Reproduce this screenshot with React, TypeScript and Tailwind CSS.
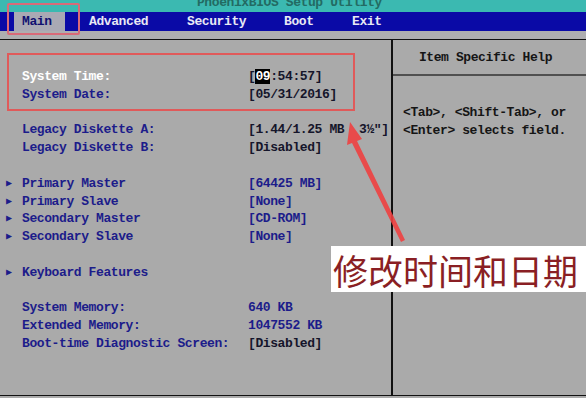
import React from "react"

const mono = { fontFamily: '"Liberation Mono", "DejaVu Sans Mono", monospace' }

type Row = {
  label?: string
  value?: React.ReactNode
  sub?: boolean
  labelClass?: string
  valueClass?: string
}

const rows: Row[] = [
  { label: "System Time:", labelClass: "text-white", value: (
    <span>
      [<span className="bg-black text-white">09</span>:54:57]
    </span>
  ), valueClass: "text-[#15152a]" },
  { label: "System Date:", value: "[05/31/2016]", valueClass: "text-[#15152a]" },
  {},
  { label: "Legacy Diskette A:", value: "[1.44/1.25 MB  3½\"]", valueClass: "text-[#15152a]" },
  { label: "Legacy Diskette B:", value: "[Disabled]", valueClass: "text-[#15152a]" },
  {},
  { label: "Primary Master", sub: true, value: "[64425 MB]" },
  { label: "Primary Slave", sub: true, value: "[None]" },
  { label: "Secondary Master", sub: true, value: "[CD-ROM]" },
  { label: "Secondary Slave", sub: true, value: "[None]" },
  {},
  { label: "Keyboard Features", sub: true },
  {},
  { label: "System Memory:", value: "640 KB" },
  { label: "Extended Memory:", value: "1047552 KB" },
  { label: "Boot-time Diagnostic Screen:", value: "[Disabled]", valueClass: "text-[#15152a]" },
]

const menu = [
  { name: "Main", w: "w-[75px]" },
  { name: "Advanced", w: "w-[98px]" },
  { name: "Security", w: "w-[97px]" },
  { name: "Boot", w: "w-[68px]" },
  { name: "Exit", w: "w-[60px]" },
]

export default function App() {
  return (
    <div
      className="relative w-[586px] h-[398px] overflow-hidden bg-[#aaaaaa] font-bold text-[13px] tracking-[-0.4px] leading-[17.8px]"
      style={mono}
    >
      {/* title bar */}
      <div className="h-[12px] bg-[#3bb9b1] flex justify-end pr-[204px] overflow-hidden">
        <span className="text-[#236b63] leading-[12px] -mt-[3px]">PhoenixBIOS Setup Utility</span>
      </div>

      {/* menu bar */}
      <div className="h-[19px] bg-[#0a0aa6] flex items-stretch pl-[14px]">
        {menu.map((m, i) => (
          <div
            key={m.name}
            className={
              m.w +
              " flex items-center " +
              (i === 0 ? "bg-[#a9a9b4] text-[#101070] pl-[8px] !w-[51px] mr-[24px]" : "text-[#e8e8f4]")
            }
          >
            {m.name}
          </div>
        ))}
      </div>

      <div className="h-[8px] bg-[#aeaeb0]" />

      {/* main panel */}
      <div className="flex h-[357px] border-t border-b border-[#111]">
        <div className="w-[393px] border-r-2 border-[#111] pt-[28px] text-[#1c1c8a]">
          {rows.map((r, i) => (
            <div key={i} className="flex h-[17.8px] items-center">
              <div className="w-[22px] pl-[6px] text-[10px]">{r.sub ? "▶" : ""}</div>
              <div className={"w-[226px] whitespace-pre " + (r.labelClass ?? "")}>{r.label}</div>
              <div className={"whitespace-pre " + (r.valueClass ?? "")}>{r.value}</div>
            </div>
          ))}
        </div>
        <div className="flex-1 text-[#151515]">
          <div className="h-[36px] flex items-center justify-center pt-[2px] pr-[8px] border-b-2 border-[#505050]">
            Item Specific Help
          </div>
          <div className="pt-[28px] pl-[10px]">
            <div>&lt;Tab&gt;, &lt;Shift-Tab&gt;, or</div>
            <div>&lt;Enter&gt; selects field.</div>
          </div>
        </div>
      </div>

      {/* annotations */}
      <div className="absolute left-[7px] top-[3px] w-[73px] h-[32px] border-2 border-[#d96a78] rounded-[2px]" />
      <div className="absolute left-[7px] top-[53px] w-[348px] h-[58px] border-2 border-[#e05a5a]" />

      <svg className="absolute left-0 top-0" width="586" height="398">
        <polygon points="350,122 362,139 357,141 405,240 401,242 352,143 347,145" fill="#ee4040" opacity="0.9" />
      </svg>

      <div
        className="absolute left-[331px] top-[246px] w-[255px] h-[46px] bg-white flex items-center pl-[2px] text-[#8a1f24] text-[35px] font-normal leading-none tracking-[0px]"
        style={{ fontFamily: '"Noto Sans CJK SC", "Noto Sans CJK JP", sans-serif' }}
      >
        修改时间和日期
      </div>
    </div>
  )
}
